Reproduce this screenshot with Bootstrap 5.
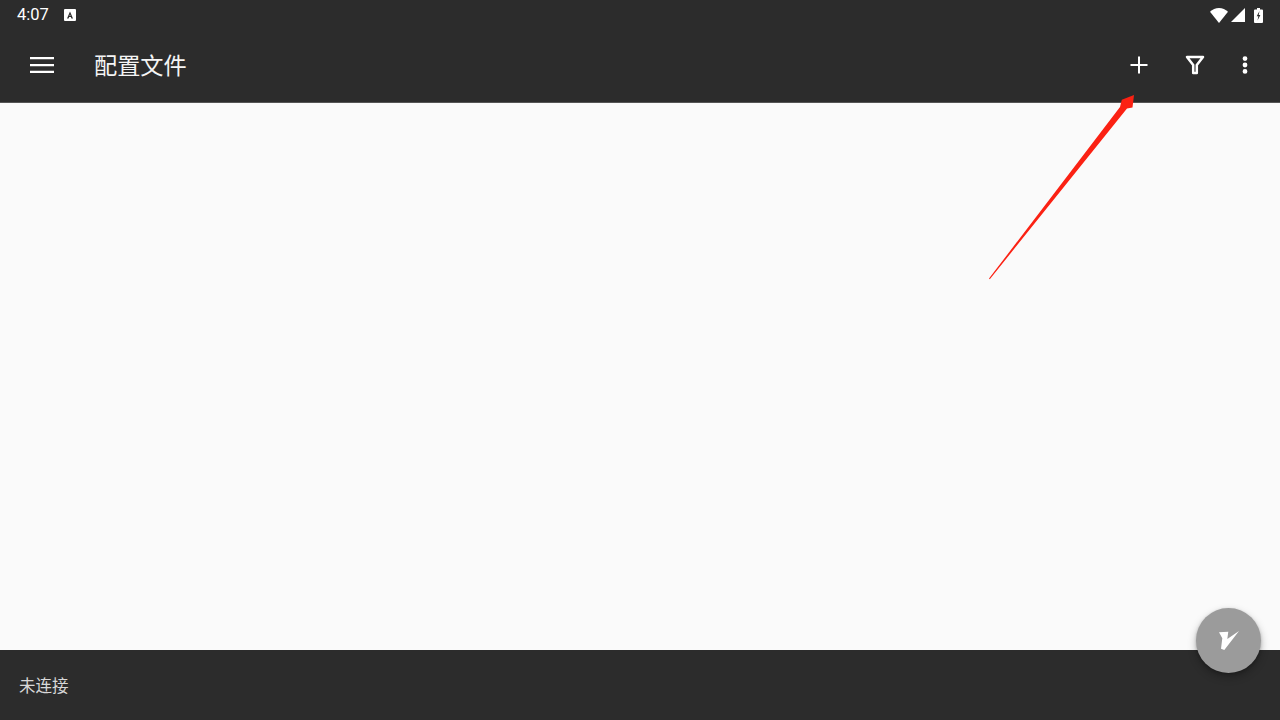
<!DOCTYPE html>
<html lang="zh-CN">
<head>
<meta charset="utf-8">
<title>配置文件</title>
<link href="https://cdn.jsdelivr.net/npm/bootstrap@5.3.0/dist/css/bootstrap.min.css" rel="stylesheet">
<style>
html,body{width:1280px;height:720px;overflow:hidden;margin:0}
body{font-family:Roboto,"Noto Sans CJK SC",sans-serif;background:#fafafa}
.shell{width:1280px;height:720px;position:relative}
.top-area{background:#2c2c2c;color:#fff;height:103px;border-bottom:1px solid #555;flex:none}
.status-row{height:30px;padding-left:17px;padding-right:17px}
.clock{font-size:16.5px;line-height:30px;font-weight:400;color:#fff}
.a-badge{margin-left:15px}
.tool-row{height:72px;padding-left:30px;padding-bottom:2px}
.page-title{font-size:23.200px;line-height:32px;font-weight:400;margin:0 0 2px 40px;font-family:"Noto Sans CJK SC",sans-serif;color:#f5f5f5}
.body-area{background:#fafafa;flex:1 1 auto}
.foot-area{background:#2c2c2c;height:70px;flex:none;padding-left:19px;color:#d8d8d8;font-size:16.500px;font-family:"Noto Sans CJK SC",sans-serif}
.tool-icons{padding-right:30px;gap:32px}
.icon-gap-wide{margin-left:1px}
.fab-round{position:absolute;left:1196px;top:608px;width:65px;height:65px;border-radius:50%;background:#9b9b9b;box-shadow:0 4px 8px rgba(0,0,0,.28),0 1px 3px rgba(0,0,0,.2)}
.arrow-mark{position:absolute;left:0;top:0;pointer-events:none}
.sig-icon{margin-left:3px}
.bat-icon{margin-left:9px}
</style>
</head>
<body>
<div class="shell d-flex flex-column">
  <header class="top-area">
    <div class="status-row d-flex align-items-center">
      <span class="clock">4:07</span>
      <svg class="a-badge" width="12" height="12" viewBox="0 0 12 12"><path fill="#fff" fill-rule="evenodd" d="M1 0h10a1 1 0 0 1 1 1v10a1 1 0 0 1-1 1H1a1 1 0 0 1-1-1V1a1 1 0 0 1 1-1zm5 2.600L3 9.400h1.600l.5-1.300h1.800l.5 1.300H9L6 2.600zm0 2.700.5 1.600h-1L6 5.300z"/></svg>
      <div class="ms-auto d-flex align-items-center">
        <svg width="18" height="15" viewBox="0 0 19 14" preserveAspectRatio="none"><path fill="#fff" d="M9.500 14 0 3.600C2.600 1.300 5.900 0 9.500 0s6.900 1.300 9.500 3.600z"/></svg>
        <svg class="sig-icon" width="14" height="14" viewBox="0 0 14 14"><path fill="#fff" d="M14 0v14H0z"/></svg>
        <svg class="bat-icon" width="9" height="15" viewBox="0 0 9 15"><path fill="#fff" fill-rule="evenodd" d="M3 0h3v1.500h2a1 1 0 0 1 1 1V14a1 1 0 0 1-1 1H1a1 1 0 0 1-1-1V2.500a1 1 0 0 1 1-1h2zM5.500 3 2.700 8.300h1.700L3.500 12.500 6.400 7H4.700z"/></svg>
      </div>
    </div>
    <div class="tool-row d-flex align-items-center">
      <svg width="24" height="18" viewBox="0 0 24 18"><path fill="#fff" d="M0 1h24v2.300H0zM0 7.900h24v2.300H0zM0 14.800h24v2.300H0z"/></svg>
      <h1 class="page-title">配置文件</h1>
      <div class="ms-auto d-flex align-items-center tool-icons">
        <svg width="24" height="24" viewBox="0 0 24 24"><path fill="#fff" d="M20.500 13h-7.500v7.500h-2V13H3.500v-2H11V3.500h2V11h7.500z"/></svg>
        <svg width="24" height="24" viewBox="0 0 24 24"><path fill="none" stroke="#fff" stroke-width="2.500" stroke-linejoin="round" d="M4 4h16l-6.200 8v8h-3.600v-8z"/></svg>
        <svg class="icon-gap-wide" width="10" height="24" viewBox="0 0 10 24"><path fill="#fff" d="M5 8a2.400 2.400 0 1 0 0-4.800A2.400 2.400 0 0 0 5 8zm0 1.600a2.400 2.400 0 1 0 0 4.800 2.400 2.400 0 0 0 0-4.800zm0 6.400a2.400 2.400 0 1 0 0 4.800 2.400 2.400 0 0 0 0-4.800z"/></svg>
      </div>
    </div>
  </header>
  <main class="body-area"></main>
  <footer class="foot-area d-flex align-items-center">未连接</footer>
  <div class="fab-round d-flex align-items-center justify-content-center">
    <svg width="65" height="65" viewBox="0 0 65 65"><path fill="#fff" d="M23 24.300 32.300 23.700 31.300 31 43 23 28.300 42 25 40.700 26.300 30.300z"/></svg>
  </div>
  <svg class="arrow-mark" width="1280" height="720" viewBox="0 0 1280 720"><path fill="#fb2113" d="M989 278.600 1120 107 1121.800 99.800 1134 95 1132.500 107.500 1127 108.500 989.800 279.200z"/></svg>
</div>
<script src="https://cdn.jsdelivr.net/npm/bootstrap@5.3.0/dist/js/bootstrap.bundle.min.js"></script>
</body>
</html>
